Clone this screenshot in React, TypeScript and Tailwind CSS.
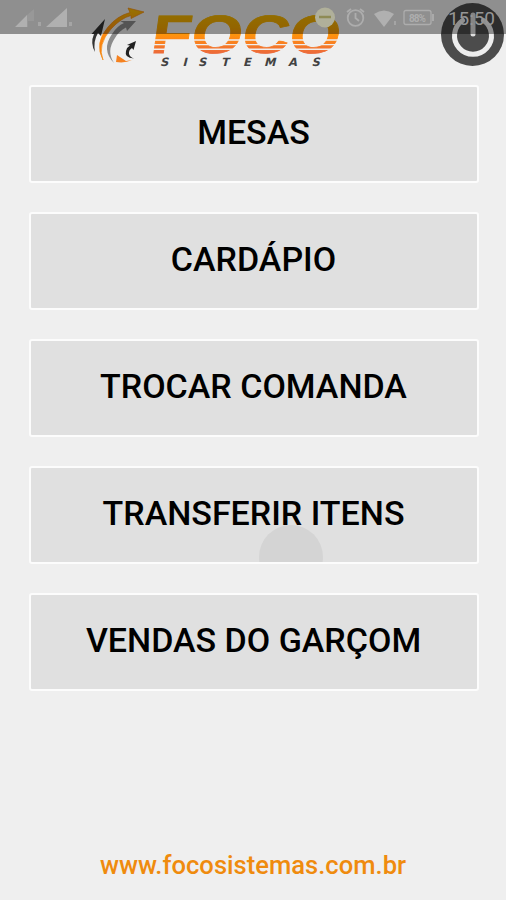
const items = ["MESAS", "CARDÁPIO", "TROCAR COMANDA", "TRANSFERIR ITENS", "VENDAS DO GARÇOM"];

function Logo() {
  return (
    <svg width="256" height="68" viewBox="88 4 256 68" className="ml-[88px] mt-1 shrink-0">
      <defs>
        <linearGradient id="swoosh" gradientUnits="userSpaceOnUse" x1="0" y1="8" x2="0" y2="60">
          <stop offset="0" stopColor="#ffc000" />
          <stop offset="0.5" stopColor="#ff8a10" />
          <stop offset="1" stopColor="#f57a10" />
        </linearGradient>
        <linearGradient id="foco" gradientUnits="userSpaceOnUse" x1="0" y1="-39" x2="0" y2="0">
          <stop offset="0" stopColor="#f5b800" />
          <stop offset="0.35" stopColor="#f5a800" />
          <stop offset="0.6" stopColor="#ff8c12" />
          <stop offset="1" stopColor="#ec6a3a" />
        </linearGradient>
      </defs>
      <path d="M95 52Q90 43 94 34L91.500 34L105 19L101 36L98 33Q93 41 95 52Z" fill="#333" />
      <path d="M103 60Q94 43 108 27Q117 16 130 12.500L128 8L144 12L131 18.500L131 15.500Q121 18 111 29Q97 45 103 60Z" fill="url(#swoosh)" stroke="#f58a10" strokeWidth="0.700" />
      <path d="M114 63Q101 50 112 34Q117 26 124 23L120 21L136 21L127 31L126 27.500Q119 31 115 38Q106 51 114 63Z" fill="#8c8c8c" />
      <path d="M117 55L126 61L132 60Q125 63.500 116 62Z" fill="#f58220" />
      <path d="M134 58.500Q124 58 126 51Q127 47 130 45.500L127 45L136 41L133.500 50L132 48Q128.500 50 129 54Q130 57 134 58.500Z" fill="#222" />
      <g transform="translate(153 53) skewX(-8)">
        <text x="-3.500" y="0" fontSize="54" fontWeight="700" textLength="189" lengthAdjust="spacingAndGlyphs" fill="url(#foco)" stroke="url(#foco)" strokeWidth="0.800" className="font-['Liberation_Sans',sans-serif]">FOCO</text>
      </g>
      <path d="M148 40H344M148 44.600H344M148 49.300H344" stroke="#efefef" strokeWidth="1.400" />
      <g transform="translate(160 66.300) skewX(-14)">
        <text x="0 22.500 38 61 83 104 128 151.500" y="0" fontSize="11.500" fontWeight="700" fill="#424242" className="font-['DejaVu_Sans',sans-serif]">SISTEMAS</text>
      </g>
    </svg>
  );
}

function PowerButton() {
  return (
    <svg width="66" height="66" viewBox="0 0 66 66" className="absolute left-[440px] top-[2px]">
      <circle cx="32.500" cy="32.500" r="31.500" fill="#4c4c4c" />
      <path d="M22.500 18.500A18.500 18.500 0 1 0 43.500 18.500" fill="none" stroke="#eeeeee" strokeWidth="5" strokeLinecap="round" />
      <path d="M33 13V32" stroke="#dedede" strokeWidth="5" strokeLinecap="round" />
    </svg>
  );
}

function StatusBar() {
  return (
    <div className="absolute inset-x-0 top-0 h-[33.500px] bg-black/40">
      <svg width="506" height="34" viewBox="0 0 506 34" fill="none">
        <path d="M15 27L27 15V27ZM46 27L67 8V27Z" fill="#b0b0b0" />
        <path d="M27 15L34 9V21H28V27H27Z" fill="#989898" />
        <path d="M38 22h3v4h-3zM69 22h3v4h-3z" fill="#a5a5a5" />
        <circle cx="325" cy="17.500" r="10" fill="#b0b09a" />
        <path d="M319 17H331" stroke="#8e8b55" strokeWidth="2.500" />
        <g stroke="#adadad" strokeWidth="1.800">
          <circle cx="355.500" cy="18" r="7.800" />
          <path d="M355.500 13V18L359 21M347 12L351 9M364 12L360 9" />
          <rect x="404" y="10.500" width="27" height="14" rx="2" strokeWidth="1.300" />
          <path d="M433 14V21" />
        </g>
        <path d="M374 14Q384 7 394 14L384 27Z" fill="#b0b0b0" />
        <path d="M394 21h2v4h-2z" fill="#a5a5a5" />
        <text x="409" y="21.500" fontSize="10" fontWeight="700" textLength="17" fill="#adadad" className="font-['Roboto',sans-serif]">88%</text>
        <text x="448" y="24.500" fontSize="19" textLength="47" fill="#969696" className="font-['Roboto',sans-serif]">15:50</text>
      </svg>
    </div>
  );
}

export default function App() {
  return (
    <main className="relative flex h-[900px] w-[506px] flex-col overflow-hidden bg-[#efefef] font-['Roboto',sans-serif]">
      <Logo />
      <nav className="ml-[29px] mt-[13px] flex w-[450px] flex-col gap-[28.600px]">
        {items.map((label) => (
          <button key={label} className="relative flex h-[98.400px] items-center justify-center overflow-hidden rounded-[3px] border-2 border-[#fcfcfc] bg-[#e0e0e0] pb-[5px] text-[34px] font-medium leading-none text-black">
            {label === "TRANSFERIR ITENS" && (
              <i className="absolute left-[228px] top-[57px] size-[64px] rounded-full bg-[#d4d4d4]" />
            )}
            <span className="relative -left-[0.500px] whitespace-nowrap">{label}</span>
          </button>
        ))}
      </nav>
      <footer className="mt-auto pb-[21px] text-center text-[25.600px] font-medium leading-[28px] text-[#ef8b0e]">
        www.focosistemas.com.br
      </footer>
      <PowerButton />
      <StatusBar />
    </main>
  );
}
